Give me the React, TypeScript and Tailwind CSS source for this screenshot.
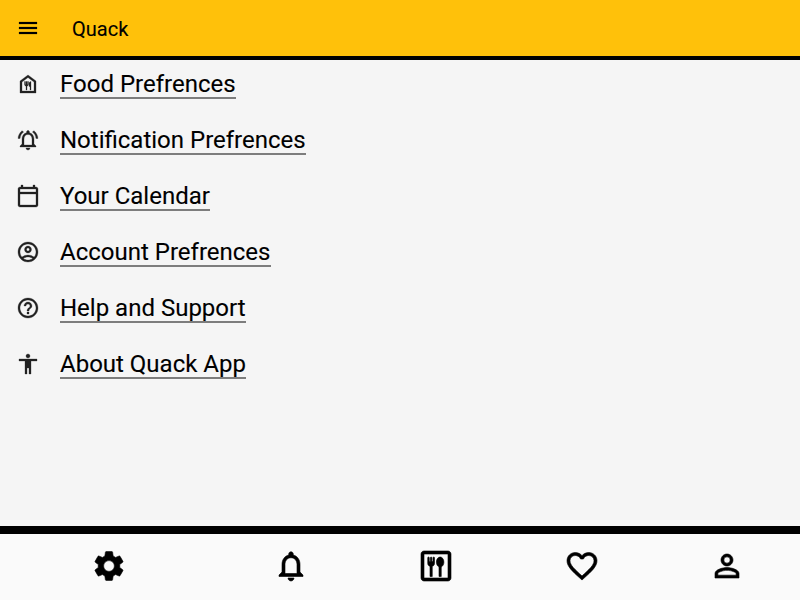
import {
  MdMenu,
  MdOutlineFoodBank,
  MdOutlineNotificationsActive,
  MdOutlineCalendarToday,
  MdOutlineAccountCircle,
  MdHelpOutline,
  MdAccessibility,
  MdSettings,
  MdNotificationsNone,
  MdOutlineDining,
  MdFavoriteBorder,
  MdPersonOutline,
} from "react-icons/md";

const links = [
  { Icon: MdOutlineFoodBank, label: "Food Prefrences" },
  { Icon: MdOutlineNotificationsActive, label: "Notification Prefrences" },
  { Icon: MdOutlineCalendarToday, label: "Your Calendar" },
  { Icon: MdOutlineAccountCircle, label: "Account Prefrences" },
  { Icon: MdHelpOutline, label: "Help and Support" },
  { Icon: MdAccessibility, label: "About Quack App" },
];

const tabs = [
  { Icon: MdSettings, label: "Settings", grow: "flex-[1.5]" },
  { Icon: MdNotificationsNone, label: "Notifications", grow: "flex-1" },
  { Icon: MdOutlineDining, label: "Dining", grow: "flex-1" },
  { Icon: MdFavoriteBorder, label: "Favorites", grow: "flex-1" },
  { Icon: MdPersonOutline, label: "Profile", grow: "flex-1" },
];

export default function App() {
  return (
    <div className="flex h-[600px] w-[800px] flex-col bg-[#f5f5f5] font-['Roboto',sans-serif] text-black">
      <header className="flex h-15 shrink-0 items-center border-b-4 border-black bg-[#ffc10a] px-4">
        <button aria-label="Menu">
          <MdMenu size={24} className="stroke-[0.2px] [&_[fill=none]]:stroke-none" />
        </button>
        <h1 className="ml-8 pt-0.5 text-[20px] leading-6 [-webkit-text-stroke:0.1px_black]">Quack</h1>
      </header>
      <main className="flex-1">
        <ul className="-mt-1">
          {links.map(({ Icon, label }) => (
            <li key={label} className="flex h-14 items-center gap-5 px-4">
              <Icon size={24} className="stroke-[0.3px] text-[#212121] [&_[fill=none]]:stroke-none" />
              <a className="h-[30px] border-b-2 border-[#7d7d7d] pr-[0.15px] text-[24px] leading-[30px] [-webkit-text-stroke:0.1px_black]">
                {label}
              </a>
            </li>
          ))}
        </ul>
      </main>
      <nav className="flex h-[74px] shrink-0 border-t-8 border-black bg-[#fafafa] pb-0.5">
        {tabs.map(({ Icon, label, grow }) => (
          <button key={label} aria-label={label} className={`flex items-center justify-center ${grow}`}>
            <Icon size={36} className="stroke-[0.4px] [&_[fill=none]]:stroke-none" />
          </button>
        ))}
      </nav>
    </div>
  );
}
